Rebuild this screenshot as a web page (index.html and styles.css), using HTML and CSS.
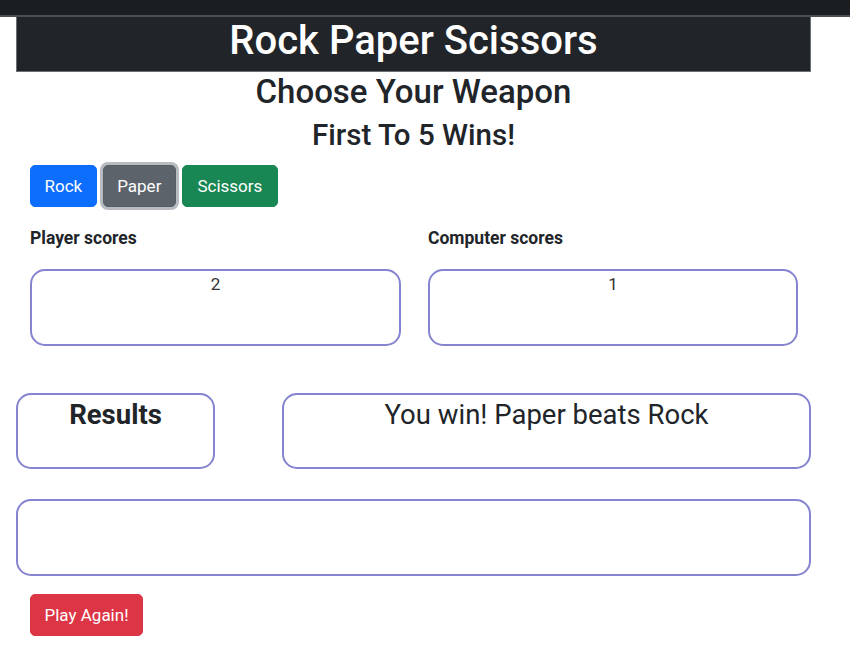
FILE: index.html
```html
<!DOCTYPE html>
<html>
<head>
<meta charset="utf-8">
<link rel="stylesheet" href="styles.css">
</head>
<body>
<div class="topbar"></div>
<div class="page">
  <header class="header"><h1 class="title">Rock Paper Scissors</h1></header>
  <h2 class="subtitle">Choose Your Weapon</h2>
  <h3 class="goal">First To 5 Wins!</h3>
  <div class="buttons">
    <button class="btn btn-rock">Rock</button>
    <button class="btn btn-paper">Paper</button>
    <button class="btn btn-scissors">Scissors</button>
  </div>
  <div class="scores">
    <div class="score-col">
      <div class="score-label">Player scores</div>
      <div class="box score-box">2</div>
    </div>
    <div class="score-col">
      <div class="score-label">Computer scores</div>
      <div class="box score-box">1</div>
    </div>
  </div>
  <div class="results-row">
    <div class="box results-label">Results</div>
    <div class="box results-msg">You win! Paper beats Rock</div>
  </div>
  <div class="box final"></div>
  <div class="again-row">
    <button class="btn btn-again">Play Again!</button>
  </div>
</div>
</body>
</html>
```
FILE: styles.css
```css
* { box-sizing: border-box; }
html, body { margin: 0; padding: 0; background: #fff; }
body { font-family: Roboto, "Noto Sans", Arial, sans-serif; color: #212529; width: 850px; height: 647px; overflow: hidden; }
.topbar { height: 17px; background: #1b1e21; border-bottom: 2px solid #4b4f54; }
.page { width: 795px; margin-left: 16px; }
.header { height: 55px; background: #212529; border: 1px solid #6c7075; border-top: none; display: flex; align-items: flex-start; justify-content: center; padding-top: 4px; }
.title { margin: 0; color: #fff; font-size: 40px; font-weight: 500; line-height: 40px; }
.subtitle { margin: 0; text-align: center; font-size: 33px; font-weight: 500; line-height: 40px; height: 43px; padding-top: 0; }
.goal { margin: 0; text-align: center; font-size: 29.5px; font-weight: 500; line-height: 36px; height: 50px; padding-top: 2px; }
.buttons { display: flex; gap: 6px; padding-left: 14px; }
.btn { font-family: inherit; font-size: 17px; color: #fff; border: 1px solid transparent; border-radius: 5px; height: 42px; padding: 0 13.5px; cursor: pointer; line-height: 1; }
.btn-rock { background: #0d6efd; border-color: #0d6efd; }
.btn-paper { background: #5c636a; border-color: #565e64; box-shadow: 0 0 0 3px #b8bcc0; }
.btn-scissors { background: #198754; border-color: #198754; padding: 0 14.5px; }
.scores { display: grid; grid-template-columns: 371px 370px; column-gap: 27px; padding-left: 14px; margin-top: 20px; }
.score-label { font-size: 17.5px; font-weight: 700; height: 42px; padding-top: 1px; }
.box { border: 2px solid #8584d0; border-radius: 15px; text-align: center; }
.score-box { height: 77px; font-size: 17px; padding-top: 3px; color: #333; }
.results-row { display: flex; justify-content: space-between; margin-top: 47px; }
.results-label { width: 199px; height: 76px; font-size: 27.5px; font-weight: 700; padding-top: 3px; }
.results-msg { width: 529px; height: 76px; font-size: 27.5px; padding-top: 3px; }
.final { height: 77px; margin-top: 30px; }
.again-row { padding-left: 14px; margin-top: 18px; }
.btn-again { background: #dc3545; border-color: #dc3545; padding: 0 13.5px; }
```
